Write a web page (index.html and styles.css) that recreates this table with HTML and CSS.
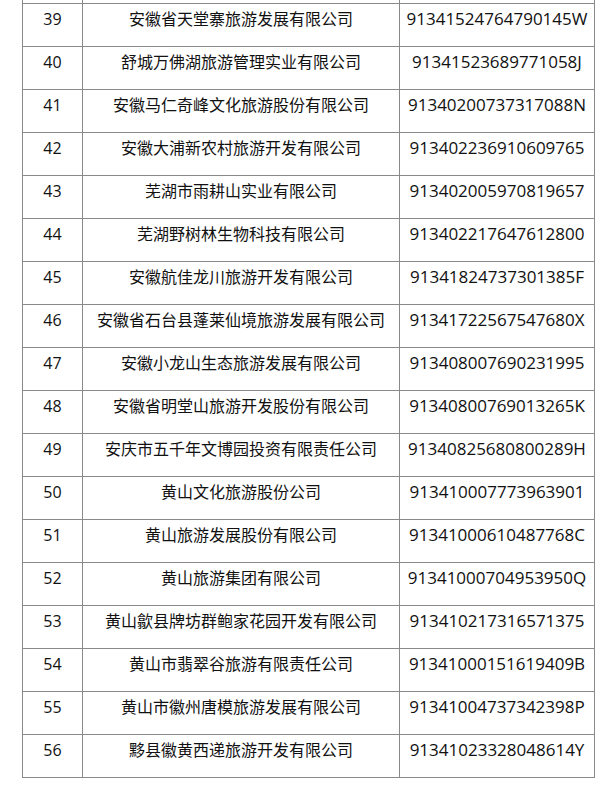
FILE: index.html
```html
<!DOCTYPE html>
<html lang="zh-CN">
<head>
<meta charset="utf-8">
<link rel="stylesheet" href="styles.css">
</head>
<body>
<table class="list">
<colgroup><col class="c-no"><col class="c-name"><col class="c-code"></colgroup>
<tbody>
<tr class="spacer"><td></td><td></td><td></td></tr>
<tr><td>39</td><td>安徽省天堂寨旅游发展有限公司</td><td class="code">91341524764790145W</td></tr>
<tr><td>40</td><td>舒城万佛湖旅游管理实业有限公司</td><td class="code">91341523689771058J</td></tr>
<tr><td>41</td><td>安徽马仁奇峰文化旅游股份有限公司</td><td class="code">91340200737317088N</td></tr>
<tr><td>42</td><td>安徽大浦新农村旅游开发有限公司</td><td class="code">913402236910609765</td></tr>
<tr><td>43</td><td>芜湖市雨耕山实业有限公司</td><td class="code">913402005970819657</td></tr>
<tr><td>44</td><td>芜湖野树林生物科技有限公司</td><td class="code">913402217647612800</td></tr>
<tr><td>45</td><td>安徽航佳龙川旅游开发有限公司</td><td class="code">91341824737301385F</td></tr>
<tr><td>46</td><td>安徽省石台县蓬莱仙境旅游发展有限公司</td><td class="code">91341722567547680X</td></tr>
<tr><td>47</td><td>安徽小龙山生态旅游发展有限公司</td><td class="code">913408007690231995</td></tr>
<tr><td>48</td><td>安徽省明堂山旅游开发股份有限公司</td><td class="code">91340800769013265K</td></tr>
<tr><td>49</td><td>安庆市五千年文博园投资有限责任公司</td><td class="code">91340825680800289H</td></tr>
<tr><td>50</td><td>黄山文化旅游股份公司</td><td class="code">913410007773963901</td></tr>
<tr><td>51</td><td>黄山旅游发展股份有限公司</td><td class="code">91341000610487768C</td></tr>
<tr><td>52</td><td>黄山旅游集团有限公司</td><td class="code">91341000704953950Q</td></tr>
<tr><td>53</td><td>黄山歙县牌坊群鲍家花园开发有限公司</td><td class="code">913410217316571375</td></tr>
<tr><td>54</td><td>黄山市翡翠谷旅游有限责任公司</td><td class="code">91341000151619409B</td></tr>
<tr><td>55</td><td>黄山市徽州唐模旅游发展有限公司</td><td class="code">91341004737342398P</td></tr>
<tr><td>56</td><td>黟县徽黄西递旅游开发有限公司</td><td class="code">91341023328048614Y</td></tr>
</tbody>
</table>
</body>
</html>
```
FILE: styles.css
```css
html, body {
  margin: 0;
  padding: 0;
  background: #fff;
}
body {
  overflow: hidden;
}
.list {
  border-collapse: collapse;
  table-layout: fixed;
  width: 572px;
  margin: -40px 0 0 22px;
  font-family: "Open Sans", "Noto Sans CJK SC", sans-serif;
  font-size: 16px;
  color: #111;
}
.c-no { width: 60px; }
.c-name { width: 317px; }
.c-code { width: 195px; }
.list td {
  border: 1px solid #8a8a8a;
  padding: 3px 2px 15px;
  line-height: 24px;
  height: 24px;
  text-align: center;
  white-space: nowrap;
  vertical-align: top;
}
.list .code {
  font-size: 17px;
}
```
